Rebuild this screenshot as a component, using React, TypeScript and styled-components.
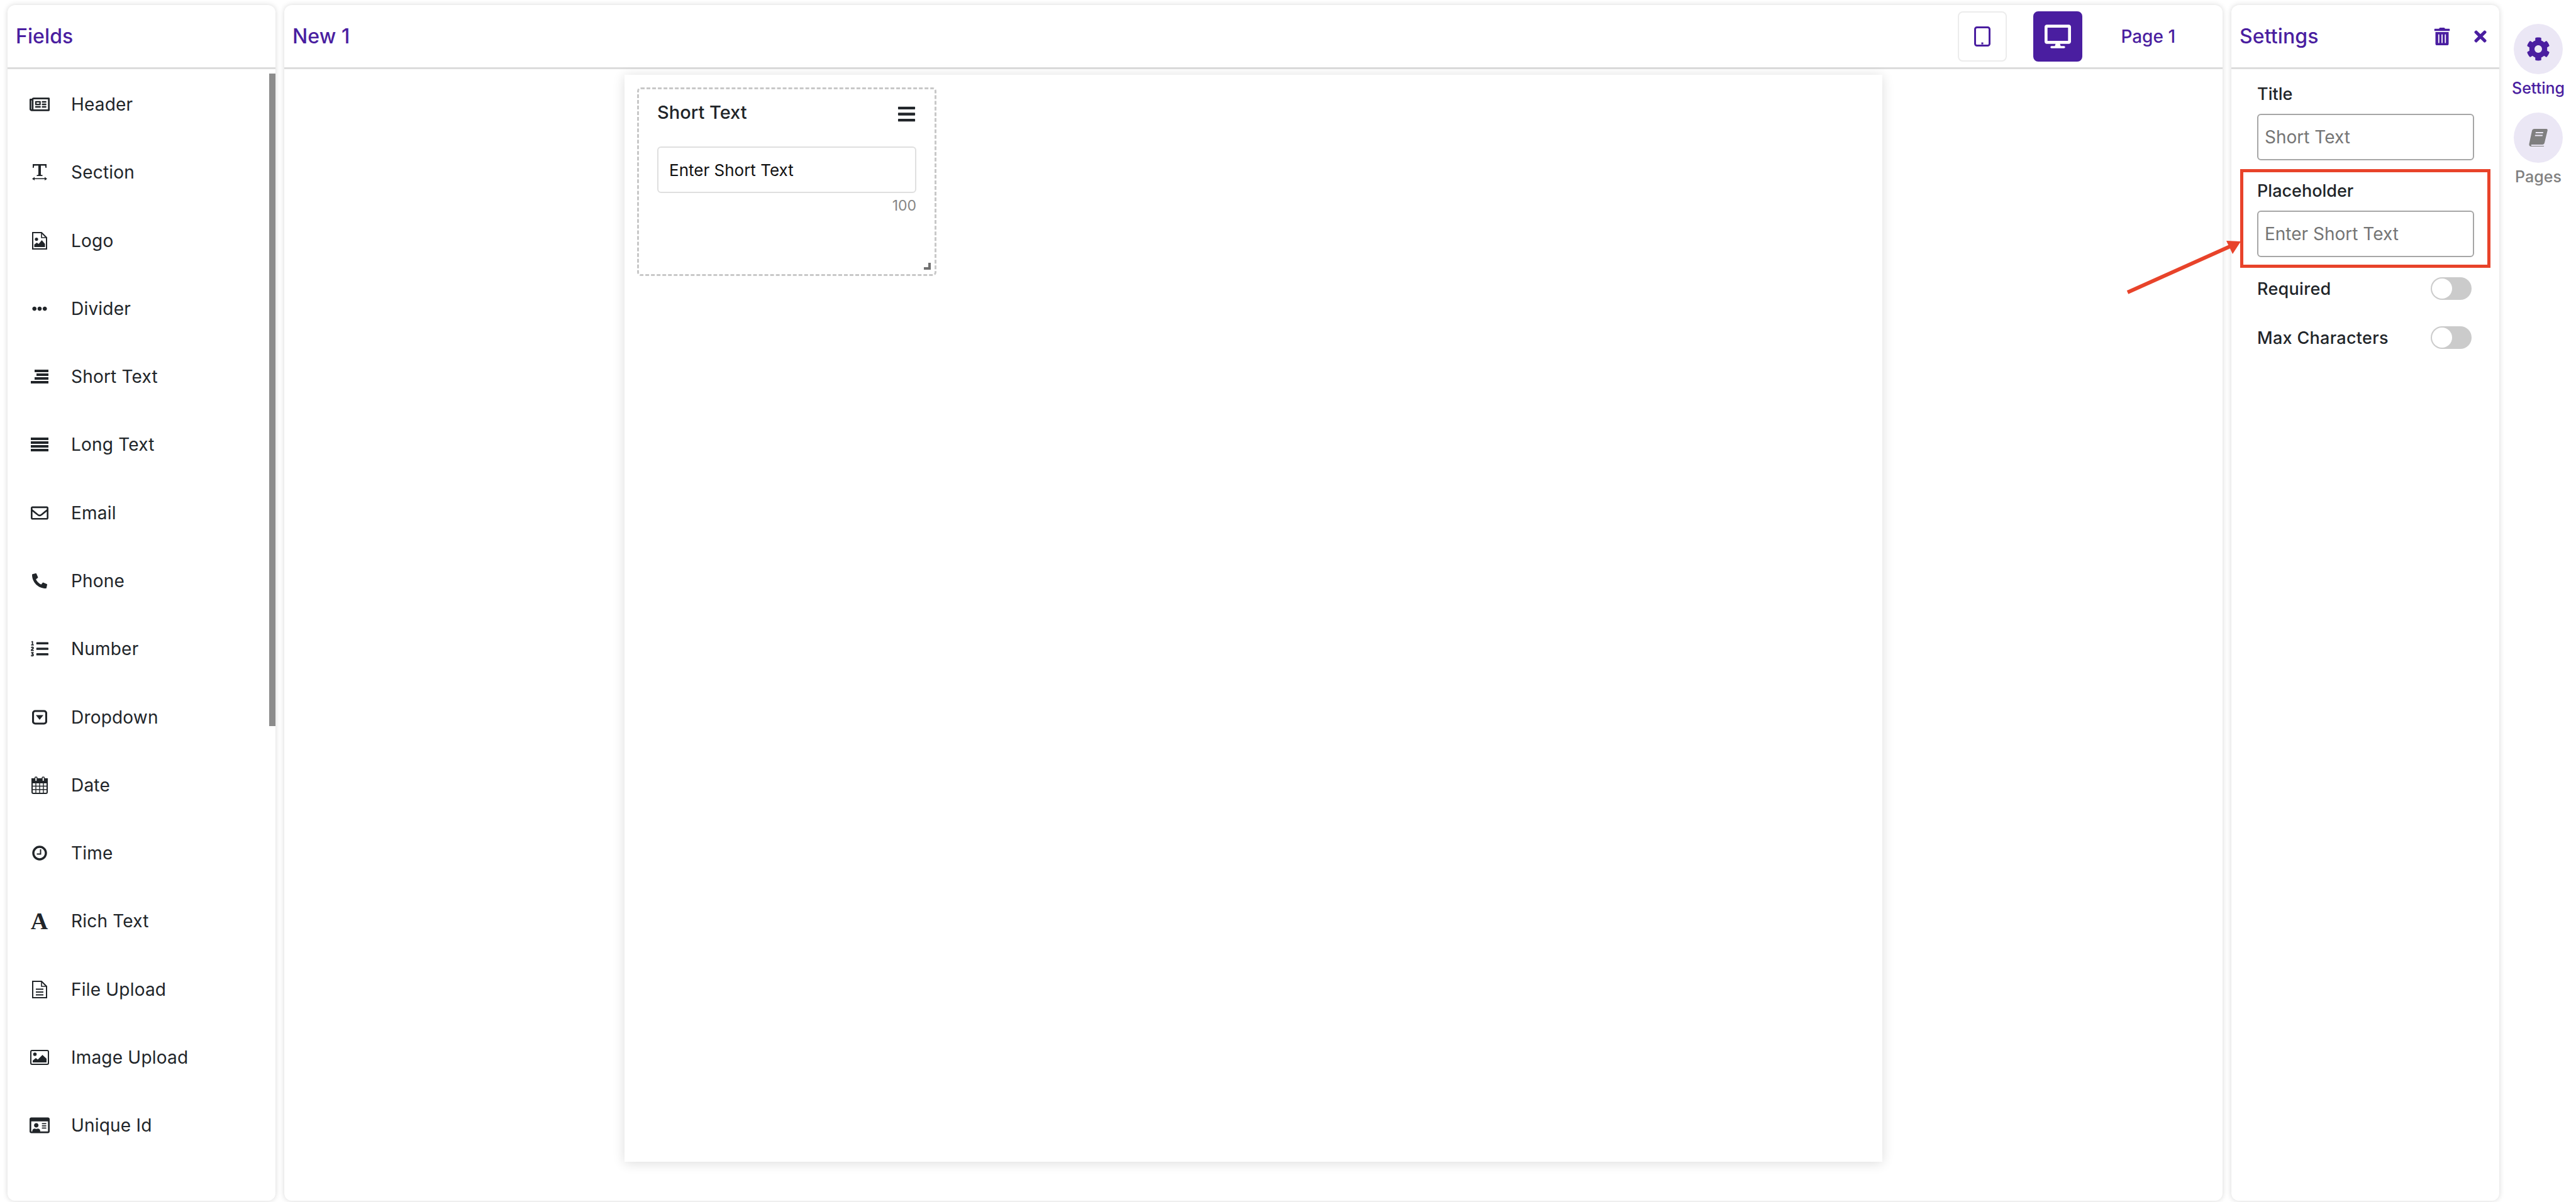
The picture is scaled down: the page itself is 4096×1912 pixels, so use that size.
import React from 'react'
import styled, { createGlobalStyle } from 'styled-components'
import {
  FaRegNewspaper, FaEllipsisH, FaRegEnvelope, FaPhoneAlt, FaListOl, FaRegIdCard,
  FaBars, FaDesktop, FaTrashAlt, FaTimes, FaCog,
} from 'react-icons/fa'

const PURPLE = '#4a1ea0'
const INK = '#212529'

const GlobalStyle = createGlobalStyle`
  html, body { margin: 0; padding: 0; background: #fff; }
  body { font-family: Inter, "Noto Sans", sans-serif; color: ${INK}; }
  * { box-sizing: border-box; }
`

const Page = styled.div`
  width: 4096px;
  height: 1912px;
  padding: 8px 0 2px 12px;
  display: flex;
  position: relative;
  overflow: hidden;
`
const Panel = styled.section<{ $width: number }>`
  width: ${p => p.$width}px;
  flex: none;
  margin-right: 14px;
  background: #fff;
  border-radius: 12px;
  box-shadow: 0 0 9px rgba(0, 0, 0, 0.16);
  display: flex;
  flex-direction: column;
  position: relative;
  overflow: hidden;
`
const PanelHeader = styled.header`
  height: 102px;
  flex: none;
  border-bottom: 3px solid #dcdcdc;
  display: flex;
  align-items: center;
  padding: 0 12px 0 13px;
`
const PanelTitle = styled.h2`
  margin: 0;
  font-size: 32px;
  font-weight: 500;
  color: ${PURPLE};
  letter-spacing: 0.1px;
`
const FieldList = styled.ul`
  list-style: none;
  margin: 0;
  padding: 2px 0 0;
`
const FieldRow = styled.li`
  height: 108.27px;
  display: flex;
  align-items: center;
`
const FieldIcon = styled.span`
  width: 102px;
  padding-right: 1px;
  flex: none;
  display: flex;
  align-items: center;
  justify-content: center;
  font-size: 28px;
  color: ${INK};
  svg { display: block; }
`
const SerifGlyph = styled.span`
  font-family: "Liberation Serif", serif;
  font-size: 38px;
  font-weight: 700;
  line-height: 28px;
`
const FieldLabel = styled.span`
  margin-left: -1px;
  font-size: 28px;
  letter-spacing: 0.2px;
  color: ${INK};
`
const ScrollThumb = styled.div`
  position: absolute;
  right: 0;
  top: 109px;
  width: 10px;
  height: 1038px;
  background: #8c8c8c;
`
const TopActions = styled.div`
  margin-left: auto;
  display: flex;
  align-items: center;
  gap: 42px;
  padding-right: 63px;
`
const ViewButton = styled.button<{ $active?: boolean }>`
  width: 78px;
  height: 80px;
  padding: 0;
  border: 2px solid ${p => (p.$active ? PURPLE : '#ececec')};
  border-radius: 8px;
  background: ${p => (p.$active ? PURPLE : '#fff')};
  color: ${p => (p.$active ? '#fff' : PURPLE)};
  display: flex;
  align-items: center;
  justify-content: center;
  font-size: 42px;
`
const PageName = styled.span`
  margin-left: 19px;
  font-size: 28px;
  font-weight: 500;
  color: ${PURPLE};
`
const CanvasArea = styled.div`
  flex: 1;
  padding-top: 9px;
`
const Canvas = styled.div`
  width: 2000px;
  height: 1729px;
  margin: 0 auto;
  padding: 20px;
  background: #fff;
  box-shadow: 0 2px 18px rgba(0, 0, 0, 0.14);
`
const Widget = styled.div`
  width: 476px;
  height: 300px;
  padding: 6px 29px 0;
  border: 3px dashed #c8c8c8;
  border-radius: 6px;
  position: relative;
`
const WidgetHead = styled.div`
  height: 60px;
  display: flex;
  justify-content: space-between;
  align-items: center;
`
const WidgetTitle = styled.span`
  font-size: 29px;
  font-weight: 500;
  color: ${INK};
`
const WidgetMenu = styled.span`
  margin-top: 7px;
  font-size: 31px;
  display: flex;
  color: ${INK};
`
const WidgetInput = styled.div`
  margin-top: 25px;
  height: 74px;
  padding-left: 17px;
  display: flex;
  align-items: center;
  border: 2px solid #dfdfdf;
  border-radius: 6px;
  font-size: 26px;
  color: #111;
`
const Counter = styled.div`
  margin-top: 6px;
  text-align: right;
  font-size: 23px;
  color: #858585;
`
const ResizeHandle = styled.span`
  position: absolute;
  right: 6px;
  bottom: 7px;
  width: 11px;
  height: 11px;
  border-right: 4px solid #707070;
  border-bottom: 4px solid #707070;
`
const HeaderTools = styled.div`
  margin-left: auto;
  display: flex;
  align-items: center;
  gap: 33px;
  padding-right: 4px;
  color: ${PURPLE};
  font-size: 28px;
  svg { display: block; }
`
const SettingsBody = styled.div`
  padding: 20px 40px 0 41px;
`
const SettingBlock = styled.div`
  padding-bottom: 11px;
  & + & { margin-top: 18px; }
`
const SettingLabel = styled.label`
  display: block;
  height: 51px;
  line-height: 40px;
  font-size: 27px;
  font-weight: 500;
  color: ${INK};
`
const SettingInput = styled.div`
  height: 74px;
  padding-left: 10px;
  display: flex;
  align-items: center;
  border: 2px solid #a6a6a6;
  border-radius: 6px;
  font-size: 28px;
  color: #757575;
`
const ToggleRow = styled.div`
  height: 78px;
  display: flex;
  align-items: center;
  justify-content: space-between;
  padding-right: 4px;
  font-size: 27px;
  font-weight: 500;
  letter-spacing: 0.3px;
  color: ${INK};
`
const Toggle = styled.span`
  width: 65px;
  height: 36px;
  border-radius: 18px;
  background: #cbcbcb;
  display: block;
  position: relative;
  &::before {
    content: '';
    position: absolute;
    left: 2px;
    top: 2px;
    width: 32px;
    height: 32px;
    border-radius: 50%;
    background: #fff;
  }
`
const SideRail = styled.nav`
  flex: 1;
  min-width: 0;
  padding: 30px 24px 0 12px;
  display: flex;
  flex-direction: column;
  align-items: center;
`
const RailItem = styled.div<{ $active?: boolean }>`
  display: flex;
  flex-direction: column;
  align-items: center;
  margin-bottom: 24px;
  font-size: 25px;
  font-weight: 500;
  color: ${p => (p.$active ? PURPLE : '#808080')};
  white-space: nowrap;
`
const RailCircle = styled.span<{ $active?: boolean }>`
  width: 78px;
  height: 80px;
  margin-bottom: 7px;
  border-radius: 50%;
  background: #ebe7f5;
  display: flex;
  align-items: center;
  justify-content: center;
  font-size: 38px;
  color: ${p => (p.$active ? PURPLE : '#7f7f7f')};
`
const Highlight = styled.div`
  position: absolute;
  left: 3562px;
  top: 269px;
  width: 398px;
  height: 157px;
  border: 5px solid #e8432a;
`
const ArrowMark = styled.svg`
  position: absolute;
  left: 3370px;
  top: 370px;
`

const TextWidthIcon = () => (
  <svg width="24" height="26" viewBox="0 0 24 26" fill="currentColor">
    <path d="M1 0h22v6h-1.6l-.7-3.4H14V17l2.6.6V19H7.4v-1.4L10 17V2.6H3.3L2.6 6H1z" />
    <path d="M0 23.5L4 20.6v2h16v-2l4 2.9-4 2.5v-2H4v2z" />
  </svg>
)
const FileImageIcon = () => (
  <svg width="24" height="28" viewBox="0 0 24 28" fill="none" stroke="currentColor" strokeWidth="2">
    <path d="M1 1h14l8 8v18H1z" />
    <path d="M15 1v8h8" strokeWidth="1.6" />
    <circle cx="7" cy="11.5" r="2.6" fill="currentColor" stroke="none" />
    <path d="M3.5 24v-4l4-3 3 2 5-6 5 6v5z" fill="currentColor" stroke="none" />
  </svg>
)
const FileLinesIcon = () => (
  <svg width="24" height="28" viewBox="0 0 24 28" fill="none" stroke="currentColor" strokeWidth="2">
    <path d="M1 1h14l8 8v18H1z" />
    <path d="M15 1v8h8" strokeWidth="1.6" />
    <path d="M6 13.5h12M6 18h12M6 22.5h12" strokeWidth="1.8" />
  </svg>
)
const BarsIcon = ({ indent }: { indent?: boolean }) => (
  <svg width="28" height="22" viewBox="0 0 28 22" fill="currentColor">
    <rect x={indent ? 6 : 0} y="0" width={indent ? 22 : 28} height="4" />
    <rect x={indent ? 9 : 0} y="6" width={indent ? 19 : 28} height="4" />
    <rect x={indent ? 6 : 0} y="12" width={indent ? 22 : 28} height="4" />
    <rect x="0" y="18" width="28" height="4" />
  </svg>
)
const DropdownIcon = () => (
  <svg width="24" height="24" viewBox="0 0 24 24">
    <rect x="1.5" y="2" width="21" height="20" rx="3.5" fill="none" stroke="currentColor" strokeWidth="3.2" />
    <path d="M6 8.5h12l-6 7.5z" fill="currentColor" />
  </svg>
)
const CalendarIcon = () => (
  <svg width="26" height="28" viewBox="0 0 26 28" fill="none" stroke="currentColor">
    <rect x="1" y="4" width="24" height="23" rx="2" strokeWidth="2" />
    <rect x="1" y="4" width="24" height="6" fill="currentColor" strokeWidth="2" />
    <path d="M7 11v15M13 11v15M19 11v15M2 15.5h22M2 21h22" strokeWidth="1.4" />
    <rect x="5.5" y="1" width="3.5" height="7" rx="1.7" fill="#fff" strokeWidth="1.5" />
    <rect x="17" y="1" width="3.5" height="7" rx="1.7" fill="#fff" strokeWidth="1.5" />
  </svg>
)
const ClockIcon = () => (
  <svg width="24" height="24" viewBox="0 0 24 24" fill="none" stroke="currentColor">
    <circle cx="12" cy="12" r="10" strokeWidth="3.4" />
    <path d="M13.5 6v7.5H7.5" strokeWidth="2" />
  </svg>
)
const PictureIcon = () => (
  <svg width="30" height="24" viewBox="0 0 30 24" fill="none" stroke="currentColor" strokeWidth="2">
    <rect x="1" y="1" width="28" height="22" rx="2" />
    <circle cx="7.5" cy="7" r="2.8" fill="currentColor" stroke="none" />
    <path d="M4 20v-3l5-4 3 2.4L19.5 8 26 14v6z" fill="currentColor" stroke="none" />
  </svg>
)
const TabletIcon = () => (
  <svg width="26" height="32" viewBox="0 0 26 32" fill="none" stroke="currentColor" strokeWidth="3">
    <rect x="1.5" y="1.5" width="23" height="29" rx="3" />
    <rect x="11.5" y="25.5" width="3" height="3" fill="currentColor" stroke="none" />
  </svg>
)
const BookIcon = () => (
  <svg width="30" height="28" viewBox="0 0 30 28" fill="currentColor">
    <path d="M9 0h19c1.400 0 2 1 1.700 2.400L25 22c-.5 2-1.600 3-3.500 3H5c-1 0-1.500.5-1.500 1s.5 1 1.500 1h19v1H4c-2.500 0-4-1.500-3.500-4L5 3c.4-1.800 2-3 4-3z" />
    <path d="M11 5h12l-.4 2H10.600zM10 9.500h12l-.4 2H9.600z" fill="#ebe7f5" />
  </svg>
)

const FIELDS: [string, React.ReactNode][] = [
  ['Header', <FaRegNewspaper size={32} />],
  ['Section', <TextWidthIcon />],
  ['Logo', <FileImageIcon />],
  ['Divider', <FaEllipsisH size={24} />],
  ['Short Text', <BarsIcon indent />],
  ['Long Text', <BarsIcon />],
  ['Email', <FaRegEnvelope />],
  ['Phone', <FaPhoneAlt size={24} />],
  ['Number', <FaListOl />],
  ['Dropdown', <DropdownIcon />],
  ['Date', <CalendarIcon />],
  ['Time', <ClockIcon />],
  ['Rich Text', <SerifGlyph>A</SerifGlyph>],
  ['File Upload', <FileLinesIcon />],
  ['Image Upload', <PictureIcon />],
  ['Unique Id', <FaRegIdCard size={32} />],
]

export default function App() {
  return (
    <Page>
      <GlobalStyle />
      <Panel $width={426}>
        <PanelHeader>
          <PanelTitle>Fields</PanelTitle>
        </PanelHeader>
        <FieldList>
          {FIELDS.map(([name, icon]) => (
            <FieldRow key={name}>
              <FieldIcon>{icon}</FieldIcon>
              <FieldLabel>{name}</FieldLabel>
            </FieldRow>
          ))}
        </FieldList>
        <ScrollThumb />
      </Panel>

      <Panel $width={3082}>
        <PanelHeader>
          <PanelTitle>New 1</PanelTitle>
          <TopActions>
            <ViewButton><TabletIcon /></ViewButton>
            <ViewButton $active><FaDesktop /></ViewButton>
            <PageName>Page 1</PageName>
          </TopActions>
        </PanelHeader>
        <CanvasArea>
          <Canvas>
            <Widget>
              <WidgetHead>
                <WidgetTitle>Short Text</WidgetTitle>
                <WidgetMenu><FaBars /></WidgetMenu>
              </WidgetHead>
              <WidgetInput>Enter Short Text</WidgetInput>
              <Counter>100</Counter>
              <ResizeHandle />
            </Widget>
          </Canvas>
        </CanvasArea>
      </Panel>

      <Panel $width={426}>
        <PanelHeader>
          <PanelTitle>Settings</PanelTitle>
          <HeaderTools>
            <FaTrashAlt />
            <FaTimes />
          </HeaderTools>
        </PanelHeader>
        <SettingsBody>
          <SettingBlock>
            <SettingLabel>Title</SettingLabel>
            <SettingInput>Short Text</SettingInput>
          </SettingBlock>
          <SettingBlock>
            <SettingLabel>Placeholder</SettingLabel>
            <SettingInput>Enter Short Text</SettingInput>
          </SettingBlock>
          <ToggleRow>Required<Toggle /></ToggleRow>
          <ToggleRow>Max Characters<Toggle /></ToggleRow>
        </SettingsBody>
      </Panel>

      <SideRail>
        <RailItem $active>
          <RailCircle $active><FaCog /></RailCircle>
          Setting
        </RailItem>
        <RailItem>
          <RailCircle><BookIcon /></RailCircle>
          Pages
        </RailItem>
      </SideRail>

      <Highlight />
      <ArrowMark width="210" height="110" viewBox="0 0 210 110">
        <path d="M13 95 L178 21" stroke="#e8432a" strokeWidth="6" fill="none" />
        <path d="M193 14 L170 13 L180 34 Z" fill="#e8432a" />
      </ArrowMark>
    </Page>
  )
}
